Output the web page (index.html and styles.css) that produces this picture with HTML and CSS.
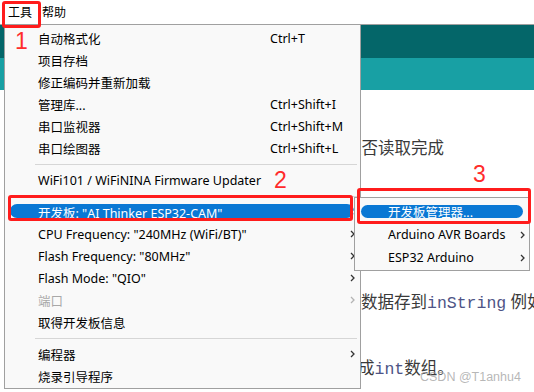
FILE: index.html
```html
<!DOCTYPE html>
<html>
<head>
  <title>Arduino - 工具</title>
  <link rel="stylesheet" href="styles.css">
</head>
<body>
  <div class="ide">
    <div class="menubar">
      <span class="menu-title">工具</span>
      <span class="menu-title">帮助</span>
    </div>
    <div class="toolbar"></div>
    <div class="tabs"></div>
    <div class="editor">
      <div class="line"></div>
      <div class="line"></div>
      <div class="line indent-a">是否读取完成</div>
      <div class="line"></div>
      <div class="line"></div>
      <div class="line"></div>
      <div class="line"></div>
      <div class="line"></div>
      <div class="line"></div>
      <div class="line indent-b">数据存到<code>inString</code> 例如</div>
      <div class="line"></div>
      <div class="line"></div>
      <div class="line indent-c">成<code>int</code>数组。</div>
    </div>
  </div>

  <div class="dropdown">
    <div class="item"><span>自动格式化</span><span class="key">Ctrl+T</span></div>
    <div class="item"><span>项目存档</span></div>
    <div class="item"><span>修正编码并重新加载</span></div>
    <div class="item"><span>管理库...</span><span class="key">Ctrl+Shift+I</span></div>
    <div class="item"><span>串口监视器</span><span class="key">Ctrl+Shift+M</span></div>
    <div class="item"><span>串口绘图器</span><span class="key">Ctrl+Shift+L</span></div>
    <div class="sep"></div>
    <div class="item"><span>WiFi101 / WiFiNINA Firmware Updater</span></div>
    <div class="sep"></div>
    <div class="item active"><span>开发板: "AI Thinker ESP32-CAM"</span><span class="key"></span>
      <svg class="arrow" width="5" height="8" viewBox="0 0 5 8"><path d="M1 1l3 3-3 3" fill="none" stroke="#fff" stroke-width="1.3"/></svg></div>
    <div class="item"><span>CPU Frequency: "240MHz (WiFi/BT)"</span><span class="key"></span>
      <svg class="arrow" width="5" height="8" viewBox="0 0 5 8"><path d="M1 1l3 3-3 3" fill="none" stroke="#333" stroke-width="1.3"/></svg></div>
    <div class="item"><span>Flash Frequency: "80MHz"</span><span class="key"></span>
      <svg class="arrow" width="5" height="8" viewBox="0 0 5 8"><path d="M1 1l3 3-3 3" fill="none" stroke="#333" stroke-width="1.3"/></svg></div>
    <div class="item"><span>Flash Mode: "QIO"</span><span class="key"></span>
      <svg class="arrow" width="5" height="8" viewBox="0 0 5 8"><path d="M1 1l3 3-3 3" fill="none" stroke="#333" stroke-width="1.3"/></svg></div>
    <div class="item disabled"><span>端口</span><span class="key"></span>
      <svg class="arrow" width="5" height="8" viewBox="0 0 5 8"><path d="M1 1l3 3-3 3" fill="none" stroke="#b4b4b4" stroke-width="1.3"/></svg></div>
    <div class="item"><span>取得开发板信息</span></div>
    <div class="sep"></div>
    <div class="item"><span>编程器</span><span class="key"></span>
      <svg class="arrow" width="5" height="8" viewBox="0 0 5 8"><path d="M1 1l3 3-3 3" fill="none" stroke="#333" stroke-width="1.3"/></svg></div>
    <div class="item"><span>烧录引导程序</span></div>
  </div>

  <div class="submenu">
    <div class="sub-item active"><span>开发板管理器...</span></div>
    <div class="sub-item"><span>Arduino AVR Boards</span>
      <svg class="arrow" width="5" height="8" viewBox="0 0 5 8"><path d="M1 1l3 3-3 3" fill="none" stroke="#333" stroke-width="1.3"/></svg></div>
    <div class="sub-item"><span>ESP32 Arduino</span>
      <svg class="arrow" width="5" height="8" viewBox="0 0 5 8"><path d="M1 1l3 3-3 3" fill="none" stroke="#333" stroke-width="1.3"/></svg></div>
  </div>

  <div class="mark mark-1"></div>
  <div class="mark mark-2"></div>
  <div class="mark mark-3"></div>
  <span class="num num-1">1</span>
  <span class="num num-2">2</span>
  <span class="num num-3">3</span>
  <span class="watermark">CSDN @T1anhu4</span>
</body>
</html>
```

FILE: styles.css
```css
body {
  margin: 0;
  width: 534px;
  height: 392px;
  overflow: hidden;
  position: relative;
  background: #fff;
  font-family: "Noto Sans", "Noto Sans CJK SC", sans-serif;
  font-size: 12.5px;
  color: #000;
}
.menubar {
  height: 24px;
  border-bottom: 1px solid #a0a0a0;
  display: flex;
  align-items: center;
  padding-left: 3px;
  background: #fff;
}
.menu-title {
  padding: 0 5px;
  font-size: 12px;
}
.toolbar {
  height: 33px;
  background: #046669;
}
.tabs {
  height: 32px;
  background: #18a0a4;
}
.editor {
  padding-top: 3px;
  font-size: 16.5px;
  color: #3a3a3a;
}
.line {
  height: 22px;
  line-height: 22px;
  white-space: nowrap;
}
.line code {
  font-family: "Liberation Mono", monospace;
  font-size: 16.5px;
  color: #4e5486;
}
.indent-a { padding-left: 345px; }
.indent-b { padding-left: 361px; }
.indent-c { padding-left: 358px; }

.dropdown {
  position: absolute;
  left: 4px;
  top: 24px;
  width: 355px;
  background: #f9f9f9;
  border: 1px solid #a0a0a0;
  padding: 2px 0 1px;
}
.item {
  position: relative;
  height: 22px;
  display: grid;
  grid-template-columns: 232px 1fr 8px;
  align-items: center;
  padding: 0 2px 0 33px;
  white-space: nowrap;
}
.item span,
.item .arrow {
  position: relative;
}
.item .arrow {
  grid-column: 3;
}
.key {
  grid-column: 2;
}
.item.active {
  color: #fff;
}
.item.active::before {
  content: "";
  position: absolute;
  left: 5px;
  right: 6px;
  top: 3px;
  bottom: 5px;
  background: #0a78d4;
  border-radius: 7px;
}
.item.disabled {
  color: #a8a8a8;
}
.sep {
  height: 10px;
  display: flex;
  align-items: center;
  padding: 0 3px 0 30px;
}
.sep::after {
  content: "";
  flex: 1;
  border-top: 1px solid #d6d6d6;
}

.submenu {
  position: absolute;
  left: 354px;
  top: 197px;
  width: 174px;
  background: #f9f9f9;
  border: 1px solid #a0a0a0;
  padding: 2px 0 1px;
}
.sub-item {
  position: relative;
  height: 23px;
  display: flex;
  align-items: center;
  justify-content: space-between;
  padding: 0 4px 0 33px;
  white-space: nowrap;
}
.sub-item span {
  position: relative;
}
.sub-item.active {
  color: #fff;
}
.sub-item.active::before {
  content: "";
  position: absolute;
  left: 6px;
  right: 6px;
  top: 5px;
  bottom: 5px;
  background: #0a78d4;
  border-radius: 7px;
}

.mark {
  position: absolute;
  border: 3px solid #ff1c1c;
  border-radius: 3px;
  box-sizing: border-box;
}
.mark-1 { left: 2px; top: 1px; width: 39px; height: 27px; }
.mark-2 { left: 8px; top: 195px; width: 345px; height: 26px; }
.mark-3 { left: 357px; top: 188px; width: 174px; height: 36px; }

.num {
  position: absolute;
  font-family: "Liberation Sans", Arial, sans-serif;
  font-size: 23px;
  line-height: 23px;
  color: #ff2b2b;
}
.num-1 { left: 15px; top: 30px; }
.num-2 { left: 274px; top: 169px; }
.num-3 { left: 473px; top: 163px; }

.watermark {
  position: absolute;
  left: 420px;
  top: 370px;
  font-family: "Liberation Sans", Arial, sans-serif;
  font-size: 12.5px;
  color: rgba(160, 160, 160, 0.75);
}
```
